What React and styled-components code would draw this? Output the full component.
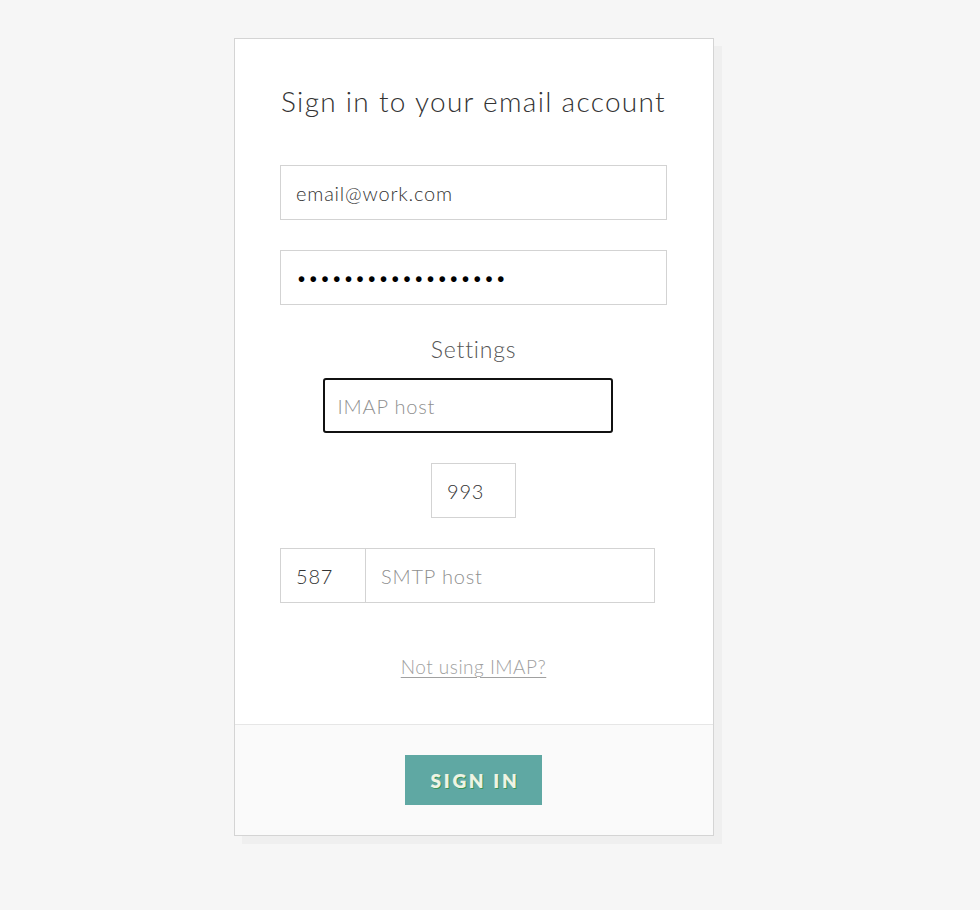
import React from 'react';
import styled, {createGlobalStyle} from 'styled-components';

const GlobalStyle = createGlobalStyle`
    html, body {
        margin: 0;
        padding: 0;
        background: #f6f6f6;
    }
    body {
        font-family: 'Lato', 'Noto Sans', sans-serif;
        font-weight: 300;
        color: #333;
    }
    * {
        box-sizing: border-box;
    }
`

const Page = styled.main`
    min-height: 910px;
    padding: 38px 0 0 234px;
`

const Card = styled.section`
    width: 480px;
    background: #fff;
    border: 1px solid #d4d4d4;
    box-shadow: 8px 8px 0 #efefef;
    display: flex;
    flex-flow: column nowrap;
`

const Body = styled.form`
    padding: 45px 46px 45px 45px;
    display: flex;
    flex-flow: column nowrap;
`

const Title = styled.h1`
    margin: 0 -30px 47px;
    font-size: 28px;
    line-height: 34px;
    font-weight: 300;
    letter-spacing: 1.3px;
    white-space: nowrap;
    text-align: center;
    color: #333;
`

const Input = styled.input`
    display: block;
    width: ${props => props.$width || '100%'};
    height: 55px;
    padding: 0 0 0 15px;
    margin: ${props => props.$margin || '0'};
    border: 1px solid #d3d3d3;
    border-radius: 0;
    background: #fff;
    font-family: 'Lato', 'Noto Sans', sans-serif;
    font-weight: 300;
    font-size: 20px;
    letter-spacing: 0.8px;
    color: #333;
    outline: none;
    &::placeholder {
        color: #8f8f8f;
    }
    &[type='password'] {
        color: #000;
        font-size: 19px;
        letter-spacing: 0.7px;
    }
`

const FocusedInput = styled(Input)`
    border: 2px solid #111;
    border-radius: 3px;
    padding-left: 13px;
`

const Settings = styled.div`
    display: flex;
    flex-flow: column nowrap;
    align-items: center;
    margin-top: 31px;
`

const SettingsLabel = styled.h2`
    margin: 0 0 16px;
    font-size: 23px;
    line-height: 26px;
    font-weight: 300;
    letter-spacing: 0.8px;
    color: #555;
`

const HostRow = styled.div`
    align-self: flex-start;
    display: flex;
    flex-flow: row nowrap;
    margin-top: 30px;
`

const Link = styled.a`
    display: block;
    margin-top: 52px;
    text-align: center;
    font-size: 19px;
    line-height: 24px;
    letter-spacing: 0.5px;
    color: #a0a0a0;
    text-decoration: underline;
    text-underline-offset: 3px;
    text-decoration-thickness: 1px;
`

const Footer = styled.footer`
    border-top: 1px solid #e6e6e6;
    background: #fafafa;
    padding: 30px 1px 30px 0;
    display: flex;
    justify-content: center;
`

const Button = styled.button`
    width: 137px;
    height: 50px;
    border: none;
    background: #5fa8a3;
    font-family: 'Lato', 'Noto Sans', sans-serif;
    font-weight: 800;
    font-size: 19px;
    letter-spacing: 2.7px;
    padding: 0 0 0 3px;
    color: #eef3e4;
    text-shadow: 1px 1px 0 #3a9558;
    cursor: pointer;
`

const App = () => {
    return <>
        <GlobalStyle/>
        <Page>
            <Card>
                <Body onSubmit={e => e.preventDefault()}>
                    <Title>Sign in to your email account</Title>
                    <Input type='email' defaultValue='email@work.com'/>
                    <Input type='password' defaultValue='passwordpassword12' $margin='30px 0 0'/>
                    <Settings>
                        <SettingsLabel>Settings</SettingsLabel>
                        <FocusedInput type='text' placeholder='IMAP host' $width='290px' $margin='0 12px 0 0'/>
                        <Input type='text' defaultValue='993' $width='85px' $margin='30px 0 0'/>
                    </Settings>
                    <HostRow>
                        <Input type='text' defaultValue='587' $width='86px'/>
                        <Input type='text' placeholder='SMTP host' $width='290px' $margin='0 0 0 -1px'/>
                    </HostRow>
                    <Link href='#'>Not using IMAP?</Link>
                </Body>
                <Footer>
                    <Button type='submit'>SIGN IN</Button>
                </Footer>
            </Card>
        </Page>
    </>
}

export default App;
